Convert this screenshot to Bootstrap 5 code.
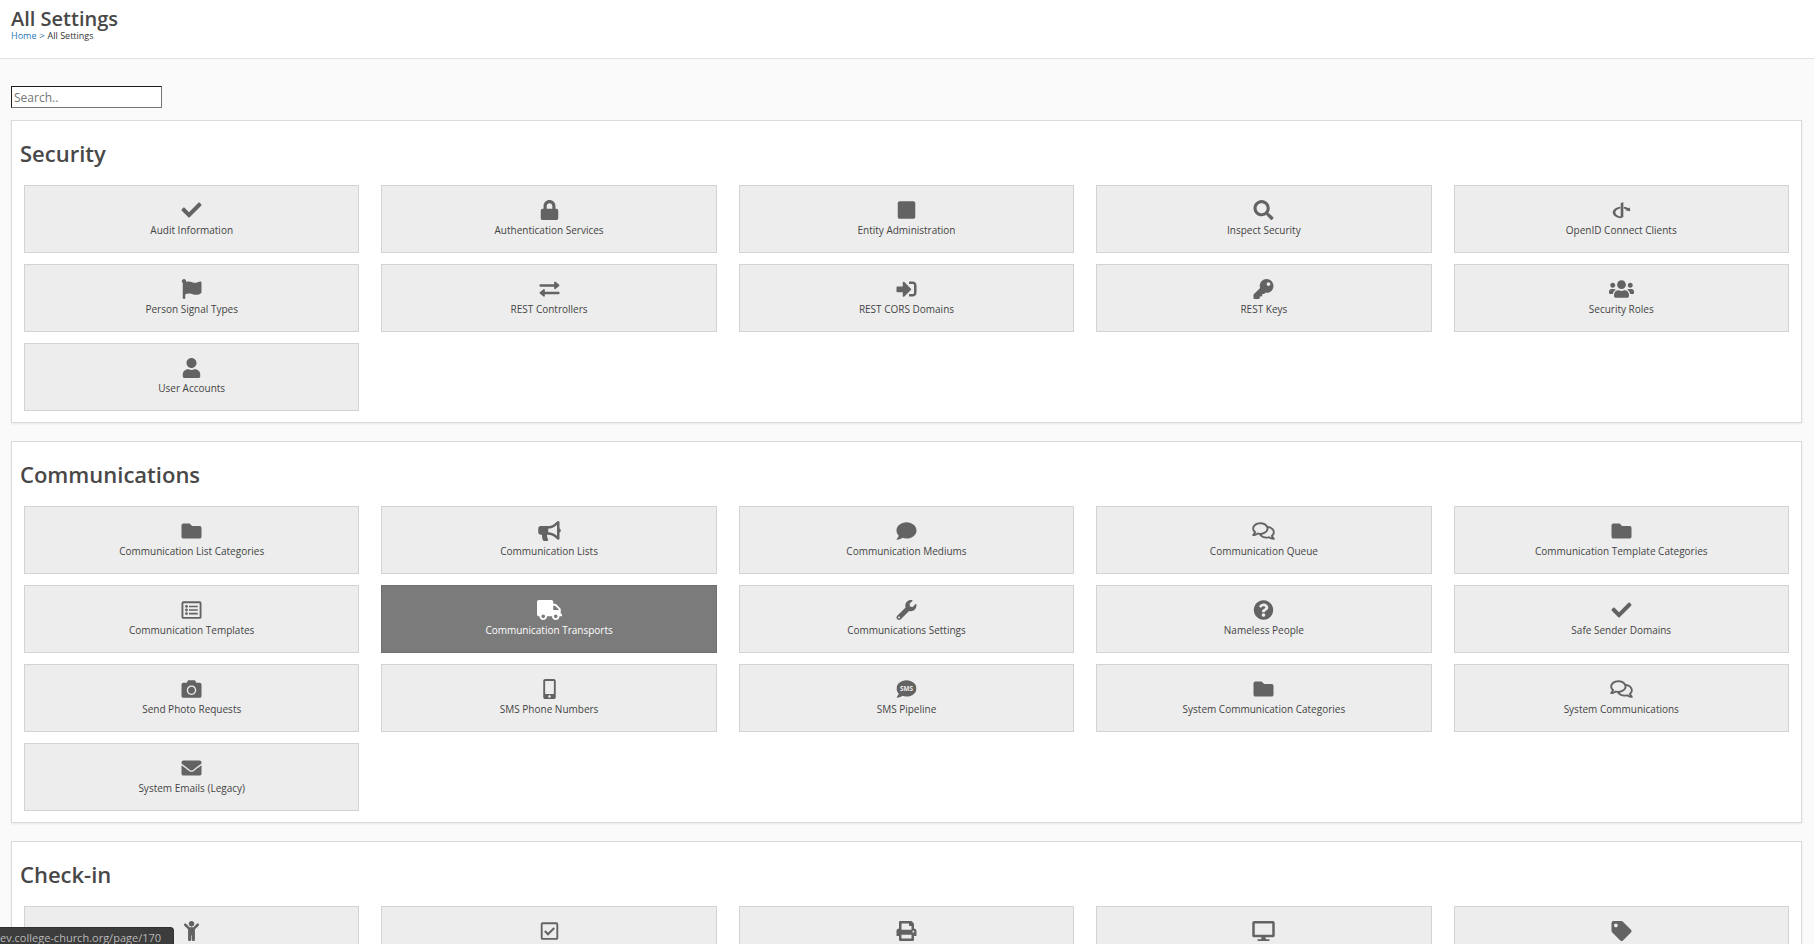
<!DOCTYPE html>
<html lang="en">
<head>
<meta charset="utf-8">
<meta name="viewport" content="width=device-width, initial-scale=1">
<title>All Settings</title>
<link href="https://cdn.jsdelivr.net/npm/bootstrap@5.3.0/dist/css/bootstrap.min.css" rel="stylesheet">
<style>
  body { font-family: "Open Sans", "Noto Sans", sans-serif; background: #fafafa; color: #484848; }
  .page-head { height: 59px; padding: 6px 11px 0; border-bottom: 1px solid #e3e3e3; }
  .page-title { font-size: 20px; line-height: 25px; font-weight: 600; }
  .crumbs { font-size: 9px; line-height: 10px; --bs-breadcrumb-divider: ">"; --bs-breadcrumb-item-padding-x: 3px; --bs-breadcrumb-divider-color: #2a6a9e; --bs-breadcrumb-margin-bottom: 0; --bs-breadcrumb-item-active-color: #333; --bs-breadcrumb-font-size: 9px; }
  .crumbs a { color: #1f78b4; }
  .page-main { padding: 27px 12px 0 11px; }
  .search-box { width: 151px; height: 22px; padding: 0 2px; margin-bottom: 12px; font-size: 12px; line-height: 18px; color: #333; background: #fff; border: 1px solid #767676; border-top-color: #1c1c1c; border-left-color: #1c1c1c; border-radius: 0; }
  .search-box::placeholder { color: #757575; }
  .panel { background: #fff; border: 1px solid #dadada; box-shadow: 0 1px 2px rgba(0,0,0,.08); padding: 16px 12px 11px; margin-bottom: 18px; }
  .panel-title { font-size: 22px; line-height: 32px; font-weight: 600; margin: 0 0 16px -4px; }
  .tile-grid { --bs-gutter-x: 22px; --bs-gutter-y: 11px; }
  .tile { height: 68px; padding-top: 14px; background: #ededed; border: 1px solid #d3d3d3; color: #444; font-size: 10px; line-height: 20px; }
  .tile svg { width: 25px; height: 20px; fill: #636363; color: #636363; }
  .tile:hover, .tile.current { background: #7b7b7b; border-color: #6f6f6f; color: #fff; }
  .tile:hover svg, .tile.current svg { fill: #fff; color: #fff; }
  .link-status { width: 174px; height: 17px; line-height: 20px; font-size: 11px; background: #3c3c3c; color: #b9b9b9; border-top-right-radius: 4px; border: 1px solid #303030; border-width: 1px 1px 0 0; }
</style>
</head>
<body class="vh-100 overflow-hidden">

<svg class="d-none" aria-hidden="true">
  <symbol id="i-check" viewBox="0 0 512 512"><path d="M173.898 439.404l-166.4-166.4c-9.997-9.997-9.997-26.206 0-36.204l36.203-36.204c9.997-9.998 26.207-9.998 36.204 0L192 312.69 432.095 72.596c9.997-9.997 26.207-9.997 36.204 0l36.203 36.204c9.997 9.997 9.997 26.206 0 36.204l-294.4 294.401c-9.998 9.997-26.207 9.997-36.204-.001z"/></symbol>
  <symbol id="i-lock" viewBox="0 0 448 512"><path d="M400 224h-24v-72C376 68.2 307.8 0 224 0S72 68.2 72 152v72H48c-26.5 0-48 21.5-48 48v192c0 26.5 21.5 48 48 48h352c26.5 0 48-21.5 48-48V272c0-26.5-21.5-48-48-48zm-104 0H152v-72c0-39.7 32.3-72 72-72s72 32.3 72 72v72z"/></symbol>
  <symbol id="i-square" viewBox="0 0 448 512"><path d="M400 32H48C21.5 32 0 53.5 0 80v352c0 26.5 21.5 48 48 48h352c26.5 0 48-21.5 48-48V80c0-26.5-21.5-48-48-48z"/></symbol>
  <symbol id="i-search" viewBox="0 0 512 512"><path d="M505 442.7L405.3 343c-4.5-4.5-10.6-7-17-7H372c27.6-35.3 44-79.7 44-128C416 93.1 322.9 0 208 0S0 93.1 0 208s93.1 208 208 208c48.3 0 92.7-16.4 128-44v16.3c0 6.4 2.5 12.5 7 17l99.7 99.7c9.4 9.4 24.6 9.4 33.9 0l28.3-28.3c9.4-9.4 9.4-24.6.1-34zM208 336c-70.7 0-128-57.2-128-128 0-70.7 57.2-128 128-128 70.7 0 128 57.2 128 128 0 70.7-57.2 128-128 128z"/></symbol>
  <symbol id="i-openid" viewBox="0 0 448 512"><path d="M271.5 432l-68 32C88.5 453.7 0 392.5 0 318.2c0-71.5 82.5-131 191.7-144.3v43c-71.5 12.5-124 53-124 101.3 0 51 58.5 93.3 135.7 103v-340l68-33.2v384zM448 291l-131.3-28.5 36.8-20.7c-19.5-11.5-43.5-20-70-24.8v-43c46.2 5.5 87.7 19.5 120.3 39.3l35-19.8L448 291z"/></symbol>
  <symbol id="i-flag" viewBox="0 0 512 512"><path d="M349.565 98.783C295.978 98.783 251.721 64 184.348 64c-24.955 0-47.309 4.384-68.045 12.013a55.947 55.947 0 0 0 3.586-23.562C118.117 24.015 94.806 1.206 66.338.048 34.345-1.254 8 24.296 8 56c0 19.026 9.497 35.825 24 45.945V488c0 13.255 10.745 24 24 24h16c13.255 0 24-10.745 24-24v-94.4c28.311-12.064 63.582-22.122 114.435-22.122 53.588 0 97.844 34.783 165.217 34.783 48.169 0 86.667-16.294 122.505-40.858C506.84 359.452 512 349.571 512 339.045v-243.1c0-23.393-24.269-38.87-45.485-29.016-34.338 15.948-76.454 31.854-116.95 31.854z"/></symbol>
  <symbol id="i-exchange" viewBox="0 0 512 512"><path d="M24 132h352V84c0-18 22-26 34-14l94 79c11 9 11 21 0 30l-94 79c-12 12-34 4-34-14v-48H24c-13 0-24-11-24-24v-16c0-13 11-24 24-24zM488 324H136v-48c0-18-22-26-34-14L8 341c-11 9-11 21 0 30l94 79c12 12 34 4 34-14v-48h352c13 0 24-11 24-24v-16c0-13-11-24-24-24z"/></symbol>
  <symbol id="i-signin" viewBox="0 0 512 512"><path d="M416 448h-84c-6.6 0-12-5.4-12-12v-40c0-6.6 5.4-12 12-12h84c17.7 0 32-14.3 32-32V160c0-17.7-14.3-32-32-32h-84c-6.6 0-12-5.4-12-12V76c0-6.6 5.4-12 12-12h84c53 0 96 43 96 96v192c0 53-43 96-96 96zm-47-201L201 79c-15-15-41-4.5-41 17v96H24c-13.3 0-24 10.7-24 24v96c0 13.3 10.7 24 24 24h136v96c0 21.5 26 32 41 17l168-168c9.3-9.4 9.3-24.6 0-34z"/></symbol>
  <symbol id="i-key" viewBox="0 0 512 512"><path d="M512 176.001C512 273.203 433.202 352 336 352c-11.22 0-22.19-1.062-32.827-3.069l-24.012 27.014A23.999 23.999 0 0 1 261.223 384H224v40c0 13.255-10.745 24-24 24h-40v40c0 13.255-10.745 24-24 24H24c-13.255 0-24-10.745-24-24v-78.059c0-6.365 2.529-12.47 7.029-16.971l161.802-161.802C163.108 213.814 160 195.271 160 176 160 78.798 238.797.001 335.999 0 433.488-.001 512 78.511 512 176.001zM336 128c0 26.51 21.49 48 48 48s48-21.49 48-48-21.49-48-48-48-48 21.49-48 48z"/></symbol>
  <symbol id="i-users" viewBox="0 0 640 512"><path d="M96 224c35.3 0 64-28.7 64-64s-28.7-64-64-64-64 28.7-64 64 28.7 64 64 64zm448 0c35.3 0 64-28.7 64-64s-28.7-64-64-64-64 28.7-64 64 28.7 64 64 64zm32 32h-64c-17.6 0-33.5 7.1-45.1 18.6 40.3 22.1 68.9 62 75.1 109.4h66c17.7 0 32-14.3 32-32v-32c0-35.3-28.7-64-64-64zm-256 0c61.9 0 112-50.1 112-112S381.9 32 320 32 208 82.1 208 144s50.1 112 112 112zm76.8 32h-8.3c-20.8 10-43.9 16-68.5 16s-47.6-6-68.5-16h-8.3C179.6 288 128 339.6 128 403.2V432c0 26.5 21.5 48 48 48h288c26.5 0 48-21.5 48-48v-28.8c0-63.6-51.6-115.2-115.2-115.2zm-223.7-13.4C161.5 263.1 145.6 256 128 256H64c-35.3 0-64 28.7-64 64v32c0 17.7 14.3 32 32 32h65.9c6.3-47.4 34.9-87.3 75.2-109.4z"/></symbol>
  <symbol id="i-user" viewBox="0 0 448 512"><path d="M224 256c70.7 0 128-57.3 128-128S294.7 0 224 0 96 57.3 96 128s57.3 128 128 128zm89.6 32h-16.7c-22.2 10.2-46.9 16-72.9 16s-50.6-5.8-72.9-16h-16.7C60.2 288 0 348.2 0 422.4V464c0 26.5 21.5 48 48 48h352c26.5 0 48-21.5 48-48v-41.6c0-74.2-60.2-134.4-134.4-134.4z"/></symbol>
  <symbol id="i-folder" viewBox="0 0 512 512"><path d="M464 128H272l-64-64H48C21.49 64 0 85.49 0 112v288c0 26.51 21.49 48 48 48h416c26.51 0 48-21.49 48-48V176c0-26.51-21.49-48-48-48z"/></symbol>
  <symbol id="i-bullhorn" viewBox="0 0 576 512"><path d="M576 240c0-23.63-12.95-44.04-32-55.12V32.01C544 23.26 537.02 0 512 0c-7.12 0-14.19 2.38-19.98 7.02l-85.03 68.03C364.28 109.19 310.66 128 256 128H64c-35.35 0-64 28.65-64 64v96c0 35.35 28.65 64 64 64h33.7c-1.39 10.48-2.18 21.14-2.18 32 0 39.77 9.26 77.35 25.56 110.94 5.19 10.69 16.52 17.06 28.4 17.06h74.28c26.05 0 41.69-29.84 25.9-50.56-16.4-21.52-26.15-48.36-26.15-77.44 0-11.11 1.62-21.79 4.41-32H256c54.66 0 108.28 18.81 150.98 52.95l85.03 68.03a32.023 32.023 0 0 0 19.98 7.02c24.92 0 32-22.78 32-32V295.13C563.05 284.04 576 263.63 576 240zm-96 141.42l-33.05-26.44C392.95 311.78 325.12 288 256 288v-96c69.12 0 136.95-23.78 190.95-66.98L480 98.58v282.84z"/></symbol>
  <symbol id="i-comment" viewBox="0 0 512 512"><path d="M256 32C114.6 32 0 125.1 0 240c0 49.6 21.4 95 57 130.7C44.5 421.1 2.7 466 2.2 466.5c-2.2 2.3-2.8 5.7-1.5 8.7S4.8 480 8 480c66.3 0 116-31.8 140.6-51.4 32.7 12.3 69 19.4 107.4 19.4 141.4 0 256-93.1 256-208S397.4 32 256 32z"/></symbol>
  <symbol id="i-comments" viewBox="0 0 576 512"><path d="M532 386.2c27.5-27.1 44-61.1 44-98.2 0-80-76.5-146.1-176.2-157.9C368.3 72.5 294.3 32 208 32 93.1 32 0 103.6 0 192c0 37 16.5 71 44 98.2-15.3 30.7-37.3 54.5-37.7 54.9-6.3 6.7-8.1 16.5-4.4 25 3.6 8.5 12 14 21.2 14 53.5 0 96.7-20.2 125.2-38.8 9.2 2.1 18.7 3.7 28.4 4.9C208.1 407.6 281.8 448 368 448c20.8 0 40.8-2.4 59.8-6.8C456.3 459.7 499.4 480 553 480c9.2 0 17.5-5.5 21.2-14 3.6-8.5 1.9-18.3-4.4-25-.4-.3-22.5-24.1-37.8-54.8zm-392.8-92.3L122.1 305c-14.1 9.1-28.5 16.3-43.1 21.4 2.7-4.7 5.4-9.7 8-14.8l15.5-31.1L77.7 256C64.2 242.6 48 220.7 48 192c0-60.7 73.3-112 160-112s160 51.3 160 112-73.3 112-160 112c-16.5 0-33-1.9-49-5.6l-19.8-4.5zM498.3 352l-24.7 24.4 15.5 31.1c2.6 5.1 5.3 10.1 8 14.8-14.6-5.1-29-12.3-43.1-21.4l-17.1-11.1-19.9 4.6c-16 3.7-32.5 5.6-49 5.6-54 0-102.2-20.1-131.3-49.7C338 339.5 416 272.9 416 192c0-3.4-.4-6.7-.7-10C479.7 196.5 528 238.8 528 288c0 28.7-16.2 50.6-29.7 64z"/></symbol>
  <symbol id="i-list" viewBox="0 0 512 512"><rect x="24" y="56" width="464" height="400" rx="24" fill="none" stroke="currentColor" stroke-width="48"/><circle cx="128" cy="164" r="36"/><circle cx="128" cy="256" r="36"/><circle cx="128" cy="348" r="36"/><path d="M192 144h224v40H192zM192 236h224v40H192zM192 328h224v40H192z"/></symbol>
  <symbol id="i-truck" viewBox="0 0 640 512"><path d="M624 352h-16V243.9c0-12.7-5.1-24.9-14.1-33.9L494 110.1c-9-9-21.2-14.1-33.9-14.1H416V48c0-26.5-21.5-48-48-48H48C21.5 0 0 21.5 0 48v320c0 26.5 21.5 48 48 48h16c0 53 43 96 96 96s96-43 96-96h128c0 53 43 96 96 96s96-43 96-96h48c8.8 0 16-7.2 16-16v-32c0-8.8-7.2-16-16-16zM160 464c-26.5 0-48-21.5-48-48s21.5-48 48-48 48 21.5 48 48-21.5 48-48 48zm320 0c-26.5 0-48-21.5-48-48s21.5-48 48-48 48 21.5 48 48-21.5 48-48 48zm80-208H416V144h44.1l99.9 99.9V256z"/></symbol>
  <symbol id="i-wrench" viewBox="0 0 512 512"><path d="M507.73 109.1c-2.24-9.03-13.54-12.09-20.12-5.51l-74.36 74.36-67.88-11.31-11.31-67.88 74.36-74.36c6.62-6.62 3.43-17.9-5.66-20.16-47.38-11.74-99.55.91-136.58 37.93-39.64 39.64-50.55 97.1-34.05 147.2L18.74 402.76c-24.99 24.99-24.99 65.51 0 90.5 24.99 24.99 65.51 24.99 90.5 0l213.21-213.21c50.12 16.71 107.47 5.68 147.37-34.22 37.07-37.07 49.7-89.32 37.91-136.73zM64 472c-13.25 0-24-10.75-24-24 0-13.26 10.75-24 24-24s24 10.74 24 24c0 13.25-10.75 24-24 24z"/></symbol>
  <symbol id="i-question" viewBox="0 0 512 512"><path d="M504 256c0 136.997-111.043 248-248 248S8 392.997 8 256C8 119.083 119.043 8 256 8s248 111.083 248 248zM262.655 90c-54.497 0-89.255 22.957-116.549 63.758-3.536 5.286-2.353 12.415 2.715 16.258l34.699 26.31c5.205 3.947 12.621 3.008 16.665-2.122 17.864-22.658 30.113-35.797 57.303-35.797 20.429 0 45.698 13.148 45.698 32.958 0 14.976-12.363 22.667-32.534 33.976C247.128 238.528 216 254.941 216 296v4c0 6.627 5.373 12 12 12h56c6.627 0 12-5.373 12-12v-1.333c0-28.462 83.186-29.647 83.186-106.667 0-58.002-60.165-102-116.531-102zM256 338c-25.365 0-46 20.635-46 46 0 25.364 20.635 46 46 46s46-20.636 46-46c0-25.365-20.635-46-46-46z"/></symbol>
  <symbol id="i-camera" viewBox="0 0 512 512"><path d="M512 144v288c0 26.5-21.5 48-48 48H48c-26.5 0-48-21.5-48-48V144c0-26.5 21.5-48 48-48h88l12.3-32.9c7-18.7 24.9-31.1 44.9-31.1h125.5c20 0 37.9 12.4 44.9 31.1L376 96h88c26.5 0 48 21.5 48 48zM376 288c0-66.2-53.8-120-120-120s-120 53.8-120 120 53.8 120 120 120 120-53.8 120-120zm-32 0c0 48.5-39.5 88-88 88s-88-39.5-88-88 39.5-88 88-88 88 39.5 88 88z"/></symbol>
  <symbol id="i-mobile" viewBox="0 0 320 512"><path d="M272 0H48C21.5 0 0 21.5 0 48v416c0 26.5 21.5 48 48 48h224c26.5 0 48-21.5 48-48V48c0-26.5-21.5-48-48-48zM160 480c-17.7 0-32-14.3-32-32s14.3-32 32-32 32 14.3 32 32-14.3 32-32 32zm112-108c0 6.6-5.4 12-12 12H60c-6.6 0-12-5.4-12-12V60c0-6.6 5.4-12 12-12h200c6.6 0 12 5.4 12 12v312z"/></symbol>
  <symbol id="i-sms" viewBox="0 0 512 512"><use href="#i-comment" width="512" height="512"/><text x="256" y="298" text-anchor="middle" font-family="Open Sans, sans-serif" font-weight="700" font-size="164" fill="#ededed">SMS</text></symbol>
  <symbol id="i-envelope" viewBox="0 0 512 512"><path d="M502.3 190.8c3.9-3.1 9.7-.2 9.7 4.7V400c0 26.5-21.5 48-48 48H48c-26.5 0-48-21.5-48-48V195.6c0-5 5.7-7.8 9.7-4.7 22.4 17.4 52.1 39.5 154.1 113.6 21.1 15.4 56.7 47.8 92.2 47.6 35.7.3 72-32.8 92.3-47.6 102-74.1 131.6-96.3 154-113.7zM256 320c23.2.4 56.6-29.2 73.4-41.4 132.7-96.3 142.8-104.7 173.4-128.7 5.8-4.5 9.2-11.5 9.2-18.9v-19c0-26.5-21.5-48-48-48H48c-26.5 0-48 21.5-48 48v19c0 7.4 3.4 14.3 9.2 18.9 30.6 23.9 40.7 32.4 173.4 128.7 16.8 12.2 50.2 41.8 73.4 41.4z"/></symbol>
  <symbol id="i-child" viewBox="0 0 384 512"><path d="M120 72c0-39.765 32.235-72 72-72s72 32.235 72 72c0 39.764-32.235 72-72 72s-72-32.236-72-72zm254.627 1.373c-12.496-12.497-32.758-12.497-45.254 0L242.745 160H141.254L54.627 73.373c-12.496-12.497-32.758-12.497-45.254 0-12.497 12.497-12.497 32.758 0 45.255L104 213.254V480c0 17.673 14.327 32 32 32h16c17.673 0 32-14.327 32-32V368h16v112c0 17.673 14.327 32 32 32h16c17.673 0 32-14.327 32-32V213.254l94.627-94.627c12.497-12.497 12.497-32.757 0-45.254z"/></symbol>
  <symbol id="i-checksq" viewBox="0 0 448 512"><rect x="24" y="56" width="400" height="400" rx="24" fill="none" stroke="currentColor" stroke-width="48"/><path d="M104 256l82 82 158-158" fill="none" stroke="currentColor" stroke-width="52"/></symbol>
  <symbol id="i-print" viewBox="0 0 512 512"><path d="M448 192V77.25c0-8.49-3.37-16.62-9.37-22.63L393.37 9.37c-6-6-14.14-9.37-22.63-9.37H96C78.33 0 64 14.33 64 32v160c-35.35 0-64 28.65-64 64v112c0 8.84 7.16 16 16 16h48v96c0 17.67 14.33 32 32 32h320c17.67 0 32-14.33 32-32v-96h48c8.84 0 16-7.16 16-16V256c0-35.35-28.65-64-64-64zm-64 256H128v-96h256v96zm0-224H128V64h192v48c0 8.84 7.16 16 16 16h48v96zm48 72c-13.25 0-24-10.75-24-24 0-13.26 10.75-24 24-24s24 10.74 24 24c0 13.25-10.75 24-24 24z"/></symbol>
  <symbol id="i-desktop" viewBox="0 0 576 512"><path d="M528 0H48C21.5 0 0 21.5 0 48v320c0 26.5 21.5 48 48 48h192l-16 48h-72c-13.3 0-24 10.7-24 24s10.7 24 24 24h272c13.3 0 24-10.7 24-24s-10.7-24-24-24h-72l-16-48h192c26.5 0 48-21.5 48-48V48c0-26.5-21.5-48-48-48zm-16 352H64V64h448v288z"/></symbol>
  <symbol id="i-tag" viewBox="0 0 512 512"><path d="M0 252.118V48C0 21.49 21.49 0 48 0h204.118a48 48 0 0 1 33.941 14.059l211.882 211.882c18.745 18.745 18.745 49.137 0 67.882L293.823 497.941c-18.745 18.745-49.137 18.745-67.882 0L14.059 286.059A48 48 0 0 1 0 252.118zM112 64c-26.51 0-48 21.49-48 48s21.49 48 48 48 48-21.49 48-48-21.49-48-48-48z"/></symbol>
</svg>

<header class="page-head bg-white">
  <h1 class="page-title mb-0">All Settings</h1>
  <nav aria-label="Breadcrumb">
    <ol class="breadcrumb crumbs">
      <li class="breadcrumb-item"><a class="text-decoration-none" href="#">Home</a></li>
      <li class="breadcrumb-item active" aria-current="page">All Settings</li>
    </ol>
  </nav>
</header>

<main class="page-main">
  <input class="search-box d-block" type="text" placeholder="Search.." aria-label="Search settings">

  <section class="panel">
    <h2 class="panel-title">Security</h2>
    <div class="row row-cols-2 row-cols-md-3 row-cols-lg-5 tile-grid">
      <div class="col"><a href="#" class="tile d-flex flex-column align-items-center text-decoration-none"><svg><use href="#i-check"/></svg><span>Audit Information</span></a></div>
      <div class="col"><a href="#" class="tile d-flex flex-column align-items-center text-decoration-none"><svg><use href="#i-lock"/></svg><span>Authentication Services</span></a></div>
      <div class="col"><a href="#" class="tile d-flex flex-column align-items-center text-decoration-none"><svg><use href="#i-square"/></svg><span>Entity Administration</span></a></div>
      <div class="col"><a href="#" class="tile d-flex flex-column align-items-center text-decoration-none"><svg><use href="#i-search"/></svg><span>Inspect Security</span></a></div>
      <div class="col"><a href="#" class="tile d-flex flex-column align-items-center text-decoration-none"><svg><use href="#i-openid"/></svg><span>OpenID Connect Clients</span></a></div>
      <div class="col"><a href="#" class="tile d-flex flex-column align-items-center text-decoration-none"><svg><use href="#i-flag"/></svg><span>Person Signal Types</span></a></div>
      <div class="col"><a href="#" class="tile d-flex flex-column align-items-center text-decoration-none"><svg><use href="#i-exchange"/></svg><span>REST Controllers</span></a></div>
      <div class="col"><a href="#" class="tile d-flex flex-column align-items-center text-decoration-none"><svg><use href="#i-signin"/></svg><span>REST CORS Domains</span></a></div>
      <div class="col"><a href="#" class="tile d-flex flex-column align-items-center text-decoration-none"><svg><use href="#i-key"/></svg><span>REST Keys</span></a></div>
      <div class="col"><a href="#" class="tile d-flex flex-column align-items-center text-decoration-none"><svg><use href="#i-users"/></svg><span>Security Roles</span></a></div>
      <div class="col"><a href="#" class="tile d-flex flex-column align-items-center text-decoration-none"><svg><use href="#i-user"/></svg><span>User Accounts</span></a></div>
    </div>
  </section>

  <section class="panel">
    <h2 class="panel-title">Communications</h2>
    <div class="row row-cols-2 row-cols-md-3 row-cols-lg-5 tile-grid">
      <div class="col"><a href="#" class="tile d-flex flex-column align-items-center text-decoration-none"><svg><use href="#i-folder"/></svg><span>Communication List Categories</span></a></div>
      <div class="col"><a href="#" class="tile d-flex flex-column align-items-center text-decoration-none"><svg><use href="#i-bullhorn"/></svg><span>Communication Lists</span></a></div>
      <div class="col"><a href="#" class="tile d-flex flex-column align-items-center text-decoration-none"><svg><use href="#i-comment"/></svg><span>Communication Mediums</span></a></div>
      <div class="col"><a href="#" class="tile d-flex flex-column align-items-center text-decoration-none"><svg><use href="#i-comments"/></svg><span>Communication Queue</span></a></div>
      <div class="col"><a href="#" class="tile d-flex flex-column align-items-center text-decoration-none"><svg><use href="#i-folder"/></svg><span>Communication Template Categories</span></a></div>
      <div class="col"><a href="#" class="tile d-flex flex-column align-items-center text-decoration-none"><svg><use href="#i-list"/></svg><span>Communication Templates</span></a></div>
      <div class="col"><a href="#" class="tile current d-flex flex-column align-items-center text-decoration-none"><svg><use href="#i-truck"/></svg><span>Communication Transports</span></a></div>
      <div class="col"><a href="#" class="tile d-flex flex-column align-items-center text-decoration-none"><svg><use href="#i-wrench"/></svg><span>Communications Settings</span></a></div>
      <div class="col"><a href="#" class="tile d-flex flex-column align-items-center text-decoration-none"><svg><use href="#i-question"/></svg><span>Nameless People</span></a></div>
      <div class="col"><a href="#" class="tile d-flex flex-column align-items-center text-decoration-none"><svg><use href="#i-check"/></svg><span>Safe Sender Domains</span></a></div>
      <div class="col"><a href="#" class="tile d-flex flex-column align-items-center text-decoration-none"><svg><use href="#i-camera"/></svg><span>Send Photo Requests</span></a></div>
      <div class="col"><a href="#" class="tile d-flex flex-column align-items-center text-decoration-none"><svg><use href="#i-mobile"/></svg><span>SMS Phone Numbers</span></a></div>
      <div class="col"><a href="#" class="tile d-flex flex-column align-items-center text-decoration-none"><svg><use href="#i-sms"/></svg><span>SMS Pipeline</span></a></div>
      <div class="col"><a href="#" class="tile d-flex flex-column align-items-center text-decoration-none"><svg><use href="#i-folder"/></svg><span>System Communication Categories</span></a></div>
      <div class="col"><a href="#" class="tile d-flex flex-column align-items-center text-decoration-none"><svg><use href="#i-comments"/></svg><span>System Communications</span></a></div>
      <div class="col"><a href="#" class="tile d-flex flex-column align-items-center text-decoration-none"><svg><use href="#i-envelope"/></svg><span>System Emails (Legacy)</span></a></div>
    </div>
  </section>

  <section class="panel">
    <h2 class="panel-title">Check-in</h2>
    <div class="row row-cols-2 row-cols-md-3 row-cols-lg-5 tile-grid">
      <div class="col"><a href="#" aria-label="Children" class="tile d-flex flex-column align-items-center"><svg><use href="#i-child"/></svg></a></div>
      <div class="col"><a href="#" aria-label="Check" class="tile d-flex flex-column align-items-center"><svg><use href="#i-checksq"/></svg></a></div>
      <div class="col"><a href="#" aria-label="Printers" class="tile d-flex flex-column align-items-center"><svg><use href="#i-print"/></svg></a></div>
      <div class="col"><a href="#" aria-label="Devices" class="tile d-flex flex-column align-items-center"><svg><use href="#i-desktop"/></svg></a></div>
      <div class="col"><a href="#" aria-label="Labels" class="tile d-flex flex-column align-items-center"><svg><use href="#i-tag"/></svg></a></div>
    </div>
  </section>
</main>

<div class="link-status position-fixed bottom-0 start-0 overflow-hidden text-nowrap">ev.college-church.org/page/170</div>

<script src="https://cdn.jsdelivr.net/npm/bootstrap@5.3.0/dist/js/bootstrap.bundle.min.js"></script>
</body>
</html>
